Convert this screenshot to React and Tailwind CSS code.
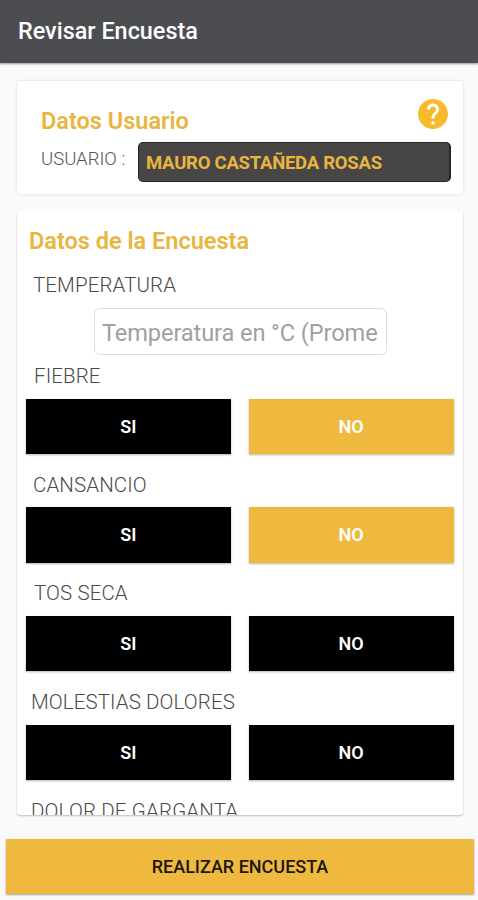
import React, { useState } from "react";

const QUESTIONS = [
  { id: "fiebre", label: "FIEBRE", indent: "pl-[17px]", value: "no" },
  { id: "cansancio", label: "CANSANCIO", indent: "pl-4", value: "no" },
  { id: "tos", label: "TOS SECA", indent: "pl-[17px]", value: null },
  { id: "molestias", label: "MOLESTIAS DOLORES", indent: "pl-3.5", value: null },
];

function HelpIcon() {
  return (
    <svg viewBox="2 2 20 20" className="block h-[30px] w-[30px]" fill="#f5bb2c">
      <path d="M12 2C6.48 2 2 6.48 2 12s4.48 10 10 10 10-4.48 10-10S17.52 2 12 2zm1 17h-2v-2h2v2zm2.07-7.75-.9.92C13.45 12.9 13 13.5 13 15h-2v-.5c0-1.1.45-2.1 1.17-2.83l1.24-1.26c.37-.36.59-.86.59-1.41 0-1.1-.9-2-2-2s-2 .9-2 2H8c0-2.21 1.79-4 4-4s4 1.79 4 4c0 .88-.36 1.68-.93 2.25z" />
    </svg>
  );
}

function AnswerButton({ text, selected, onClick }) {
  return (
    <button
      type="button"
      onClick={onClick}
      className={`h-[55.5px] flex-1 text-[18px] font-semibold text-white shadow-[0_1px_2px_rgba(0,0,0,0.3)] ${
        selected ? "bg-[#efb940]" : "bg-black"
      }`}
    >
      {text}
    </button>
  );
}

function Question({ label, indent, value, onChange }) {
  return (
    <div className="h-[108.7px] shrink-0">
      <div className={`h-[36.5px] text-[20.5px] leading-[28px] font-light tracking-[0.1px] text-[#4a4a4a] ${indent}`}>{label}</div>
      <div className="flex gap-[18px] pr-[9.5px] pl-[9px]">
        <AnswerButton text="SI" selected={value === "si"} onClick={() => onChange("si")} />
        <AnswerButton text="NO" selected={value === "no"} onClick={() => onChange("no")} />
      </div>
    </div>
  );
}

export default function App() {
  const [answers, setAnswers] = useState(
    Object.fromEntries(QUESTIONS.map((q) => [q.id, q.value]))
  );
  const [temp, setTemp] = useState("");

  return (
    <div className="flex h-[900px] w-[478px] flex-col overflow-hidden bg-[#fafafa] font-['Roboto',sans-serif]">
      <header className="flex h-[63px] shrink-0 items-center bg-[#4c4d51] pl-[18px] shadow-[0_1px_2px_rgba(0,0,0,0.4)]">
        <h1 className="text-[23.4px] font-medium text-white">Revisar Encuesta</h1>
      </header>

      <section className="mx-[17px] mt-[18px] h-[113px] w-[446px] shrink-0 rounded-[3px] bg-white pr-3 pl-6 shadow-[0_0_3px_rgba(0,0,0,0.16)]">
        <div className="flex h-[61px] items-start justify-between pr-[3px]">
          <h2 className="pt-[25px] text-[23.5px] leading-[30px] font-semibold text-[#e8b640]">Datos Usuario</h2>
          <div className="pt-[18px]">
            <HelpIcon />
          </div>
        </div>
        <div className="flex items-start justify-between">
          <span className="pt-[5px] text-[18.5px] leading-[24px] font-light text-[#555]">USUARIO :</span>
          <div className="flex h-10 w-[313px] items-center rounded-[5px] border border-r-2 border-[#252525] bg-[#484644] pt-1 pl-[7px] text-[18.5px] font-bold tracking-[-0.25px] text-[#e8b640]">
            MAURO CASTAÑEDA ROSAS
          </div>
        </div>
      </section>

      <section className="mx-[17px] mt-[17px] flex h-[604px] w-[446px] shrink-0 flex-col overflow-hidden rounded-[3px] bg-white shadow-[0_1px_2px_rgba(0,0,0,0.25)]">
        <h2 className="shrink-0 pt-[15px] pl-3 text-[23.5px] leading-[30px] font-semibold text-[#e8b640]">
          Datos de la Encuesta
        </h2>
        <label className="mt-[15px] h-[37px] shrink-0 pl-4 text-[20.5px] leading-[28px] font-light tracking-[0.1px] text-[#4a4a4a]">
          TEMPERATURA
        </label>
        <div className="flex h-[54px] shrink-0 pl-[77px]">
          <input
            value={temp}
            onChange={(e) => setTemp(e.target.value)}
            placeholder="Temperatura en °C (Prome"
            className="h-[47px] w-[293px] rounded-md border border-[#dcdcdc] pt-0.5 pr-1 pl-[7px] text-[23.6px] tracking-[-0.1px] placeholder:text-[#a0a0a0]"
          />
        </div>
        {QUESTIONS.map((q) => (
          <Question
            key={q.id}
            label={q.label}
            indent={q.indent}
            value={answers[q.id]}
            onChange={(v) => setAnswers({ ...answers, [q.id]: v })}
          />
        ))}
        <div className="shrink-0 pl-3.5 text-[20.5px] leading-[28px] font-light tracking-[0.15px] text-[#4a4a4a]">
          DOLOR DE GARGANTA
        </div>
      </section>

      <button
        type="button"
        className="mx-1.5 mt-6 h-[55px] w-[468px] shrink-0 bg-[#efb940] text-[18px] font-medium text-[#1c1710] shadow-[0_1px_2px_rgba(0,0,0,0.35)]"
      >
        REALIZAR ENCUESTA
      </button>
    </div>
  );
}
